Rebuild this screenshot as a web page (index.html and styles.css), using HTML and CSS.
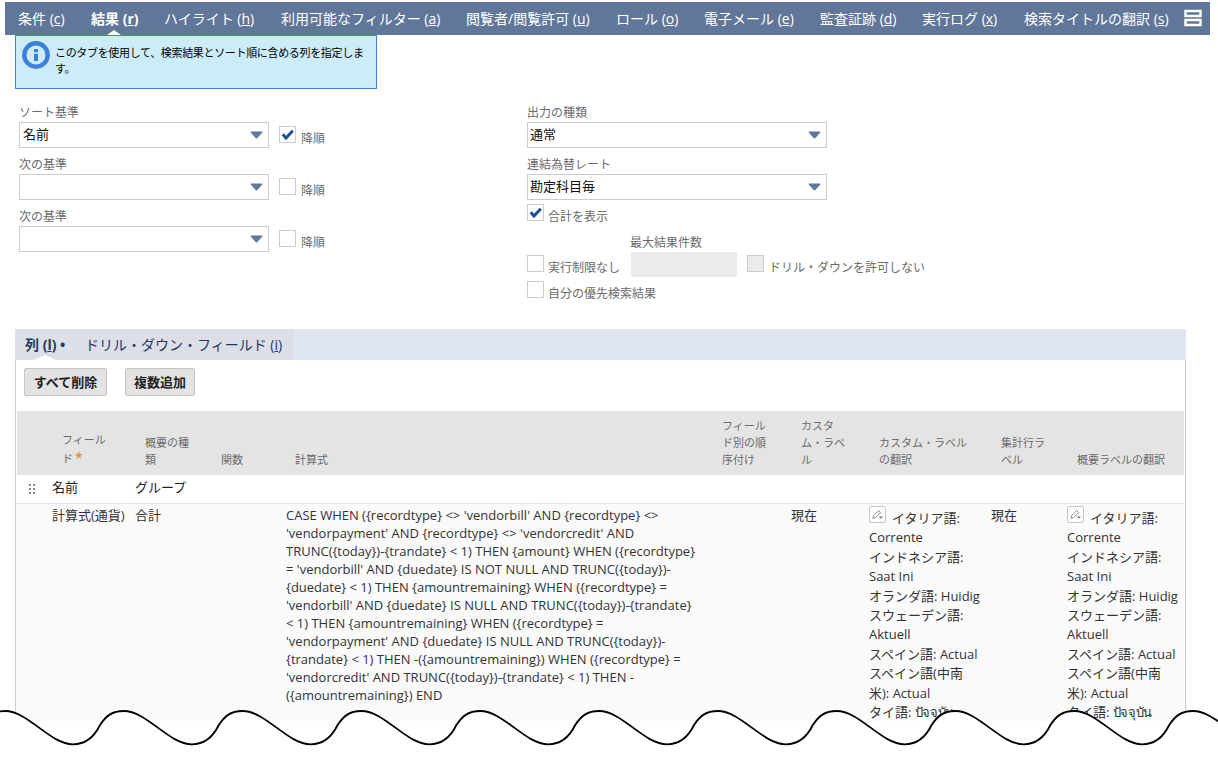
FILE: index.html
```html
<!DOCTYPE html>
<html lang="ja">
<head>
<meta charset="utf-8">
<title>検索結果</title>
<link rel="stylesheet" href="styles.css">
</head>
<body>
<svg class="defs" width="0" height="0">
  <symbol id="arrow" viewBox="0 0 13 8"><path d="M1.2.5h10.6q1.2.2.3 1.3L7.4 7q-.9.8-1.8 0L.9 1.8Q0 .7 1.2.5z" fill="#607799"/></symbol>
  <symbol id="check" viewBox="0 0 15 15"><path d="M2.8 7.3l3.2 3.8L12.8 3.8" fill="none" stroke="#1f4f93" stroke-width="3"/></symbol>
  <symbol id="pencil" viewBox="0 0 15 15"><path d="M2.8 11.3l.8-2.7 5-5 2 2-5 5z" fill="none" stroke="#8c8c8c" stroke-width="1"/><path d="M9 9.5h4l-2 2.3z" fill="#777"/></symbol>
</svg>
<div class="page">
  <nav class="tabs">
    <span>条件 (<u>c</u>)</span>
    <span class="active">結果 (<u>r</u>)</span>
    <span>ハイライト (<u>h</u>)</span>
    <span>利用可能なフィルター (<u>a</u>)</span>
    <span>閲覧者/閲覧許可 (<u>u</u>)</span>
    <span>ロール (<u>o</u>)</span>
    <span>電子メール (<u>e</u>)</span>
    <span>監査証跡 (<u>d</u>)</span>
    <span>実行ログ (<u>x</u>)</span>
    <span>検索タイトルの翻訳 (<u>s</u>)</span>
    <svg class="layout-icon" width="18" height="18" viewBox="0 0 18 18"><path d="M1.5 2h15v5h-15zM1.5 11h15v5h-15z" fill="#607799" stroke="#fff" stroke-width="2.4"/></svg>
  </nav>
  <div class="info">
    <svg width="28" height="28" viewBox="0 0 28 28"><circle cx="14" cy="14" r="11.7" fill="none" stroke="#3f7fdc" stroke-width="4.4"/><path d="M12 8h4v3.2h-4zM12 12.8h4V20h-4z" fill="#3f7fdc"/></svg>
    <p>このタブを使用して、検索結果とソート順に含める列を指定しま<br>す。</p>
  </div>
  <section class="form">
    <div class="sort">
      <label>ソート基準</label>
      <div class="row"><div class="select"><span>名前</span><svg width="13" height="8"><use href="#arrow"/></svg></div><i class="box"><svg width="15" height="15"><use href="#check"/></svg></i><span class="caption">降順</span></div>
      <label>次の基準</label>
      <div class="row"><div class="select"><span></span><svg width="13" height="8"><use href="#arrow"/></svg></div><i class="box"></i><span class="caption">降順</span></div>
      <label>次の基準</label>
      <div class="row"><div class="select"><span></span><svg width="13" height="8"><use href="#arrow"/></svg></div><i class="box"></i><span class="caption">降順</span></div>
    </div>
    <div class="output">
      <label>出力の種類</label>
      <div class="row"><div class="select"><span>通常</span><svg width="13" height="8"><use href="#arrow"/></svg></div></div>
      <label>連結為替レート</label>
      <div class="row last"><div class="select"><span>勘定科目毎</span><svg width="13" height="8"><use href="#arrow"/></svg></div></div>
      <div class="option total"><i class="box"><svg width="15" height="15"><use href="#check"/></svg></i><span class="caption">合計を表示</span></div>
      <div class="limits">
        <div class="option unlimited"><i class="box"></i><span class="caption">実行制限なし</span></div>
        <div class="max"><label>最大結果件数</label><div class="field"></div></div>
        <div class="option drill"><i class="box disabled"></i><span class="caption">ドリル・ダウンを許可しない</span></div>
      </div>
      <div class="option preferred"><i class="box"></i><span class="caption">自分の優先検索結果</span></div>
    </div>
  </section>
  <section class="panel">
    <div class="subtabs"><div class="group"><b>列 (<u>l</u>) •</b><span>ドリル・ダウン・フィールド (<u>i</u>)</span></div></div>
    <div class="body">
      <div class="buttons"><button class="clear">すべて削除</button><button class="add">複数追加</button></div>
      <div class="grid head">
        <span></span><span class="field-name">フィール<br>ド<em>*</em></span><span>概要の種<br>類</span><span>関数</span><span>計算式</span><span>フィール<br>ド別の順<br>序付け</span><span>カスタ<br>ム・ラベ<br>ル</span><span>カスタム・ラベル<br>の翻訳</span><span>集計行ラ<br>ベル</span><span>概要ラベルの翻訳</span>
      </div>
      <div class="grid first">
        <svg class="handle" width="7" height="11" viewBox="0 0 7 11" fill="#888"><path d="M0 0h2v2H0zM4 0h2v2H4zM0 4h2v2H0zM4 4h2v2H4zM0 8h2v2H0zM4 8h2v2H4z"/></svg><span>名前</span><span>グループ</span>
      </div>
      <div class="grid second">
        <span></span><span>計算式(通貨)</span><span>合計</span><span></span>
        <p class="formula">CASE WHEN ({recordtype} &lt;&gt; 'vendorbill' AND {recordtype} &lt;&gt;<br>'vendorpayment' AND {recordtype} &lt;&gt; 'vendorcredit' AND<br>TRUNC({today})-{trandate} &lt; 1) THEN {amount} WHEN ({recordtype}<br>= 'vendorbill' AND {duedate} IS NOT NULL AND TRUNC({today})-<br>{duedate} &lt; 1) THEN {amountremaining} WHEN ({recordtype} =<br>'vendorbill' AND {duedate} IS NULL AND TRUNC({today})-{trandate}<br>&lt; 1) THEN {amountremaining} WHEN ({recordtype} =<br>'vendorpayment' AND {duedate} IS NULL AND TRUNC({today})-<br>{trandate} &lt; 1) THEN -({amountremaining}) WHEN ({recordtype} =<br>'vendorcredit' AND TRUNC({today})-{trandate} &lt; 1) THEN -<br>({amountremaining}) END</p>
        <span></span><span>現在</span>
        <div class="langs"><div class="lead"><i class="edit"><svg width="15" height="15"><use href="#pencil"/></svg></i>イタリア語:</div>
          <div>Corrente</div><div>インドネシア語:</div><div>Saat Ini</div><div>オランダ語: Huidig</div><div>スウェーデン語:</div><div>Aktuell</div><div>スペイン語: Actual</div><div>スペイン語(中南</div><div>米): Actual</div><div>タイ語: <span class="thai">ปัจจุบัน</span></div></div>
        <span>現在</span>
        <div class="langs"><div class="lead"><i class="edit"><svg width="15" height="15"><use href="#pencil"/></svg></i>イタリア語:</div>
          <div>Corrente</div><div>インドネシア語:</div><div>Saat Ini</div><div>オランダ語: Huidig</div><div>スウェーデン語:</div><div>Aktuell</div><div>スペイン語: Actual</div><div>スペイン語(中南</div><div>米): Actual</div><div>タイ語: <span class="thai">ปัจจุบัน</span></div></div>
      </div>
    </div>
  </section>
  <svg class="wave" width="1218" height="62" viewBox="0 700 1218 62">
    <path d="M-113.8 711c23 0 45 33.3 68 33.3c14 0 22-9 27-19.3c6-9 12-14 23.8-14c23 0 45 33.3 68 33.3c14 0 22-9 27-19.3c6-9 12-14 23.8-14c23 0 45 33.3 68 33.3c14 0 22-9 27-19.3c6-9 12-14 23.8-14c23 0 45 33.3 68 33.3c14 0 22-9 27-19.3c6-9 12-14 23.8-14c23 0 45 33.3 68 33.3c14 0 22-9 27-19.3c6-9 12-14 23.8-14c23 0 45 33.3 68 33.3c14 0 22-9 27-19.3c6-9 12-14 23.8-14c23 0 45 33.3 68 33.3c14 0 22-9 27-19.3c6-9 12-14 23.8-14c23 0 45 33.3 68 33.3c14 0 22-9 27-19.3c6-9 12-14 23.8-14c23 0 45 33.3 68 33.3c14 0 22-9 27-19.3c6-9 12-14 23.8-14c23 0 45 33.3 68 33.3c14 0 22-9 27-19.3c6-9 12-14 23.8-14c23 0 45 33.3 68 33.3c14 0 22-9 27-19.3c6-9 12-14 23.8-14c23 0 45 33.3 68 33.3V790H-120V711z" fill="#fff" stroke="#000" stroke-width="1.8"/>
  </svg>
</div>
</body>
</html>
```
FILE: styles.css
```css
* { box-sizing: border-box; }
body { margin: 0; background: #fff; font-family: "Open Sans", "Noto Sans CJK JP", "Noto Sans", sans-serif; font-size: 13px; color: #222; }
p { margin: 0; }
.defs { display: none; }
.page { position: relative; width: 1218px; height: 762px; overflow: hidden; padding-top: 2px; white-space: nowrap; }

.tabs { display: grid; grid-template-columns: 73px 73px 117px 185px 150px 88px 116px 102px 102px 160px 26px; width: 1205px; height: 33px; margin-left: 5px; padding-left: 13px; background: #607799; color: #fff; font-size: 14px; line-height: 34px; }
.tabs span { height: 33px; }
.tabs .active { position: relative; font-weight: 700; }
.tabs .active::after { content: ""; position: absolute; left: 16px; bottom: 0; border: 7px solid transparent; border-top: 0; border-bottom: 5px solid #fff; }
.layout-icon { margin-top: 7px; }

.info { display: flex; gap: 5px; width: 362px; height: 54px; margin-left: 15px; padding: 5px 6px; background: #cdecfa; border: 1px solid #3f7fdc; color: #000; font-size: 11px; line-height: 16px; letter-spacing: -.33px; }
.info svg { flex: none; }
.info p { padding-top: 4px; }

.form { display: flex; height: 240px; padding: 13px 0 0 19px; }
.sort { width: 508px; }
.form label { display: block; height: 20px; color: #6b6b6b; font-size: 12px; line-height: 22px; }
.row { display: flex; height: 26px; margin-bottom: 6px; }
.row.last { margin-bottom: 4px; }
.select { display: flex; align-items: center; justify-content: space-between; width: 250px; height: 26px; padding: 0 5px 1px 3px; border: 1px solid #ccc; color: #111; line-height: 23px; }
.output .select { width: 300px; }
.output .select span { margin-left: -1px; }
.box { flex: none; display: block; width: 17px; height: 17px; border: 1px solid #ccc; background: #fff; }
.box svg { display: block; }
.box.disabled { background: #ebebeb; }
.caption { color: #6b6b6b; font-size: 12px; line-height: 20px; }
.sort .box { margin: 4px 5px 0 10px; }
.sort .caption { padding-top: 7px; }
.option { display: flex; gap: 4px; }
.option .caption { padding-top: 3px; }
.drill { gap: 5px; }
.total { height: 28px; }
.limits { display: flex; height: 49px; }
.unlimited { width: 103px; padding-top: 23px; }
.max { width: 117px; }
.max .field { margin-left: 1px; }
.form .max label { line-height: 21px; }
.field { width: 106px; height: 25px; background: #ebebeb; }
.drill { padding-top: 23px; }

.panel { width: 1171px; margin-left: 15px; }
.subtabs { height: 31px; background: #dfe6ef; color: #24385b; font-size: 14px; line-height: 31px; }
.group { position: relative; display: flex; width: 278px; height: 31px; padding-left: 10px; background: #dcdfe8; }
.group b { width: 60px; }
.group::after { content: ""; position: absolute; left: 19px; bottom: 0; border: 11px solid transparent; border-top: 0; border-bottom: 5px solid #fff; }
.body { height: 361px; border: solid #ccc; border-width: 0 1px; padding-right: 1px; overflow: hidden; }
.buttons { display: flex; gap: 18px; height: 51px; padding: 8px 0 0 8px; }
.buttons button { height: 28px; padding: 0; border: 1px solid #c6c6c6; border-radius: 2px; background: #e3e3e3; color: #222; font: 700 13px/26px "Open Sans", "Noto Sans CJK JP", sans-serif; }
.clear { width: 83px; }
.add { width: 70px; }
.grid { display: grid; grid-template-columns: 36px 83px 76px 74px 427px 79px 78px 122px 76px 1fr; }
.head { height: 64px; align-items: end; padding-bottom: 7px; margin-left: 1px; background: #e4e4e4; color: #6b6b6b; font-size: 11px; line-height: 17px; }
.head { grid-template-columns: 35px 83px 76px 74px 427px 79px 78px 122px 76px 1fr; }
.head span { padding-left: 10px; }
.head .field-name { line-height: 19px; }
.head em { color: #d0860b; font: 14px/10px "Open Sans", sans-serif; vertical-align: 0; margin-left: 2px; }
.first { height: 28px; line-height: 24px; }
.handle { margin: 9px 0 0 13px; }
.second { height: 218px; border-top: 1px solid #e5e5e5; background: #fafafa; line-height: 22px; color: #333; }
.formula { grid-column: 5; margin-left: 1px; line-height: 18px; padding-top: 2px; }
.langs { padding-top: 5px; line-height: 19.4px; }
.langs div { height: 19.4px; }
.langs .lead { display: flex; gap: 6px; }
.thai { letter-spacing: -.4px; }
.edit { width: 17px; height: 17px; margin-top: -3px; border: 1px solid #c6c6c6; border-radius: 2px; background: #fff; }
.edit svg { display: block; }
.wave { position: absolute; left: 0; top: 700px; }
```
